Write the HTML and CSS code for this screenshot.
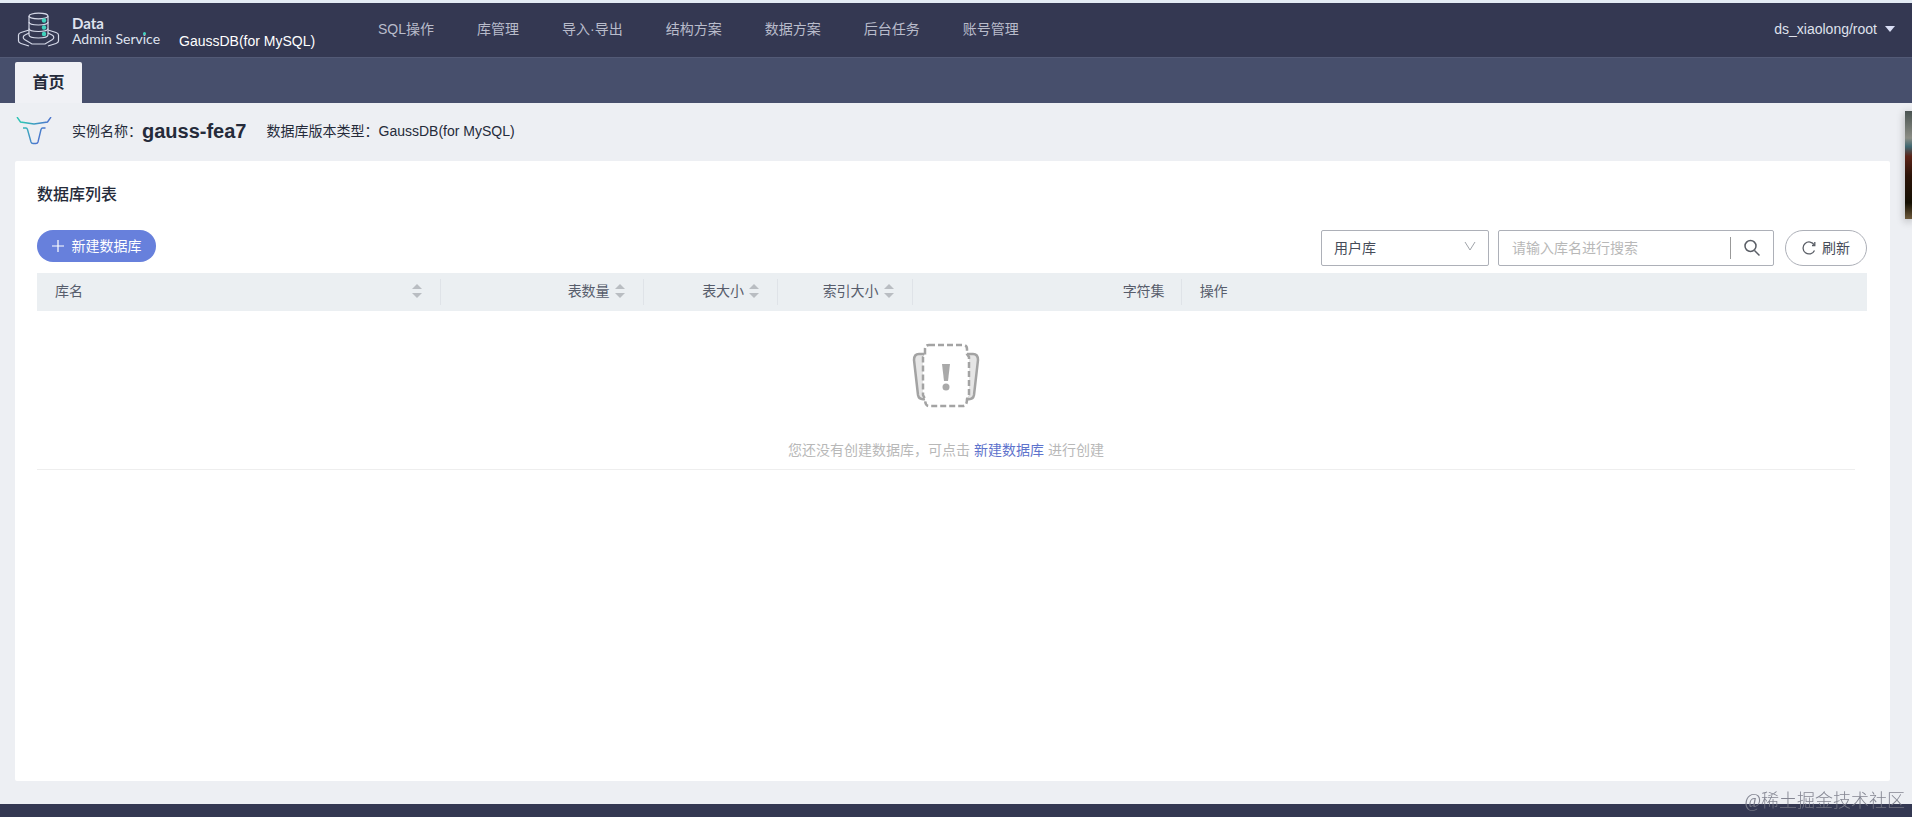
FILE: index.html
```html
<!DOCTYPE html>
<html lang="zh-CN">

<head>
  <meta charset="UTF-8">
  <meta name="viewport" content="width=device-width, initial-scale=1.0">
  <title>数据管理服务 DAS</title>
  <link rel="stylesheet" href="styles.css">
</head>
<body>
  <header class="header">
    <a href="#" class="logo">
      <svg width="44" height="36" viewBox="0 0 44 36" fill="none" stroke="#d5d9e8" stroke-width="1.2">
        <path d="M12 4v19c0 4 19 4 19 0V4"/>
        <ellipse cx="21.500" cy="4" rx="9.500" ry="2.800"/>
        <path d="M12 10c0 4 19 4 19 0M12 16.500c0 4 19 4 19 0"/>
        <path d="M12 18l-8 2.500c-1.500.5-2.500 1.500-2.500 2.500v6c0 1 1 2 2.500 2.500l8 2.500M31 18l8 2.500c1.500.5 2.500 1.500 2.500 2.500v6c0 1-1 2-2.500 2.500l-8 2.500"/>
        <path d="M12 21l-4 2c-2 1-2.500 3-.5 4.500l7.500 4.500h13l7.500-4.500c2-1.500 1.500-3.500-.5-4.500l-4-2"/>
        <g fill="#41d3bd" stroke="none">
          <circle cx="27" cy="8.500" r="2.200"/>
          <circle cx="27" cy="15.500" r="2.200"/>
          <circle cx="27" cy="22" r="2.200"/>
        </g>
      </svg>
      <span class="logo-text"><b>Data</b>Admin Serv<span class="dot">i</span>ce</span>
    </a>
    <span class="engine">GaussDB(for MySQL)</span>
    <nav class="nav">
      <a href="#">SQL操作</a>
      <a href="#">库管理</a>
      <a href="#">导入·导出</a>
      <a href="#">结构方案</a>
      <a href="#">数据方案</a>
      <a href="#">后台任务</a>
      <a href="#">账号管理</a>
    </nav>
    <button class="user">ds_xiaolong/root <span class="caret"></span></button>
  </header>

  <div class="tabs">
    <a href="#" class="tab">首页</a>
  </div>

  <div class="instance">
    <svg width="36" height="28" viewBox="0 0 36 28" fill="none" stroke="url(#bull)" stroke-width="1.400">
      <defs>
        <linearGradient id="bull" x1="0" y1="0" x2="36" y2="20" gradientUnits="userSpaceOnUse">
          <stop offset="0.200" stop-color="#2fc3b5"/>
          <stop offset="0.800" stop-color="#4f6fd0"/>
        </linearGradient>
      </defs>
      <path d="M1 0l3.500 5L18 7l13.500-2L35 0"/>
      <path d="M7 11h3q1 0 1.500 1.500L15 25q.5 1.500 2 1.500h3q1.500 0 2-1.500l3-12.500q.5-1.500 1.500-1.500h3"/>
    </svg>
    <span class="label">实例名称：</span>
    <strong class="name">gauss-fea7</strong>
    <span class="label">数据库版本类型：</span>
    <span class="value">GaussDB(for MySQL)</span>
  </div>

  <main class="card">
    <h1>数据库列表</h1>
    <div class="toolbar">
      <button class="create-btn">
        <svg width="12" height="12" viewBox="0 0 12 12" stroke="#fff" stroke-width="1.200"><path d="M6 0v12M0 6h12"/></svg>
        新建数据库
      </button>
      <div class="select">
        <select aria-label="库类型">
          <option>用户库</option>
        </select>
        <svg width="12" height="10" viewBox="0 0 12 10" fill="none" stroke="#a0a4aa"><path d="M1 1l5 8 5-8"/></svg>
      </div>
      <div class="search">
        <input type="text" placeholder="请输入库名进行搜索" aria-label="搜索库名">
        <button aria-label="搜索">
          <svg width="18" height="18" viewBox="0 0 18 18" fill="none" stroke="#5a5e66" stroke-width="1.500"><circle cx="7.500" cy="7" r="5.500"/><path d="M11.500 11.500l5 5"/></svg>
        </button>
      </div>
      <button class="refresh-btn">
        <svg width="14" height="14" viewBox="0 0 14 14" fill="none" stroke="#5a5e66" stroke-width="1.300"><path d="M12.500 9.500A6 6 0 1 1 12.300 4"/><path d="M12.800 1v3.500H10"/></svg>
        刷新
      </button>
    </div>

    <table class="db-table">
      <colgroup>
        <col class="col-name">
        <col class="col-count">
        <col class="col-size">
        <col class="col-size">
        <col class="col-charset">
        <col>
      </colgroup>
      <thead>
        <tr>
          <th><div class="th-name">库名 <span class="sort"></span></div></th>
          <th><div>表数量 <span class="sort"></span></div></th>
          <th><div>表大小 <span class="sort"></span></div></th>
          <th><div>索引大小 <span class="sort"></span></div></th>
          <th class="th-charset"><div>字符集</div></th>
          <th><div class="th-name">操作</div></th>
        </tr>
      </thead>
      <tbody>
        <tr>
          <td colspan="6">
            <div class="empty">
              <svg width="68" height="66" viewBox="0 0 68 66" fill="none" stroke="#a3a3a3" stroke-width="2.500">
                <path d="M13 11H7q-5 0-5 6l4 35q1 5 7 4zM55 11h6q5 0 5 6l-4 35q-1 5-7 4z" fill="#e6e6e6"/>
                <path d="M17 2h34q4 0 4 4v5l2 3v38l-2 4q0 7-4 7H17q-4 0-4-7l-2-4V14l2-3V6q0-4 4-4z" fill="#fff" stroke-dasharray="6 3"/>
                <path d="M30 21h8l-2 17h-4z" fill="#a9a9a9" stroke="none"/>
                <circle cx="34" cy="44" r="3.500" fill="#a9a9a9" stroke="none"/>
              </svg>
              <p>您还没有创建数据库，可点击 <a href="#">新建数据库</a> 进行创建</p>
            </div>
          </td>
        </tr>
      </tbody>
    </table>
  </main>

  <footer class="footer"></footer>
  <div class="side-photo"></div>
  <div class="watermark">@稀土掘金技术社区</div>
</body>

</html>
```

FILE: styles.css
```css
* {
  box-sizing: border-box;
}

body {
  margin: 0;
  min-height: 100vh;
  display: flex;
  flex-direction: column;
  background-color: #edeff3;
  border-top: 3px solid #e3ebf4;
  color: #252b3a;
  font-family: "Liberation Sans", "Noto Sans CJK SC", sans-serif;
  font-size: 14px;
  line-height: 20px;
}

a {
  color: inherit;
  text-decoration: none;
}

button,
input,
select {
  font: inherit;
  color: inherit;
  margin: 0;
  padding: 0;
  border: none;
  background: none;
}

button {
  cursor: pointer;
}

svg {
  flex: none;
}

.header {
  display: flex;
  align-items: center;
  height: 54px;
  padding: 0 17px 0 17px;
  background-color: #343852;
  color: #fff;
}

.logo {
  display: flex;
  align-items: center;
  gap: 11px;
  width: 162px;
}

.logo-text {
  padding-top: 2px;
  color: #dfe3ef;
  font-family: Lato, sans-serif;
  font-size: 14px;
  line-height: 16px;
  white-space: nowrap;
}

.logo-text b {
  display: block;
  font-size: 15px;
}

.dot {
  position: relative;
}

.dot::after {
  content: "";
  position: absolute;
  top: 2px;
  left: 0;
  width: 3px;
  height: 3px;
  border-radius: 50%;
  background-color: #41d3bd;
}

.engine {
  width: 199px;
  padding-top: 22px;
}

.nav {
  display: flex;
  flex: 1;
  gap: 43px;
  padding-bottom: 3px;
  color: #b9bccb;
}

.user {
  display: flex;
  align-items: center;
  gap: 8px;
  padding-bottom: 2px;
  color: #dfe1ec;
}

.caret {
  border: 5px solid transparent;
  border-top: 6px solid #d9def5;
  border-bottom: none;
}

.tabs {
  display: flex;
  align-items: flex-end;
  height: 46px;
  padding-left: 15px;
  border-top: 1px solid #535a76;
  background-color: #474f6c;
}

.tab {
  width: 67px;
  height: 41px;
  border-radius: 2px 2px 0 0;
  background-color: #f0f1f5;
  font-size: 16px;
  font-weight: bold;
  line-height: 41px;
  text-align: center;
}

.instance {
  display: flex;
  align-items: center;
  height: 58px;
  padding: 0 0 2px 16px;
}

.instance .label {
  margin-left: 20px;
}

.instance .name {
  font-size: 20px;
}

.card {
  flex: 1;
  margin: 0 22px 23px 15px;
  padding: 22px 23px 22px 22px;
  border-radius: 2px;
  background-color: #fff;
}

h1 {
  margin: 0;
  font-size: 16px;
  font-weight: 500;
  line-height: 24px;
}

.toolbar {
  display: flex;
  align-items: flex-start;
  height: 43px;
  margin-top: 23px;
  color: #464c59;
}

.create-btn {
  display: flex;
  align-items: center;
  justify-content: center;
  gap: 8px;
  width: 119px;
  height: 32px;
  margin-right: auto;
  padding-bottom: 1px;
  border-radius: 16px;
  background-color: #6780dc;
  color: #fff;
}

.select {
  position: relative;
  width: 168px;
  margin-right: 9px;
}

.select select {
  width: 100%;
  height: 36px;
  padding-left: 12px;
  border: 1px solid #adb0b8;
  border-radius: 2px;
  appearance: none;
}

.select svg {
  position: absolute;
  top: 11px;
  right: 13px;
  pointer-events: none;
}

.search {
  display: flex;
  align-items: center;
  width: 276px;
  height: 36px;
  margin-right: 11px;
  border: 1px solid #adb0b8;
  border-radius: 2px;
}

.search input {
  flex: 1;
  min-width: 0;
  padding-left: 13px;
}

.search input::placeholder {
  color: #b8b8b8;
}

.search button {
  display: flex;
  align-items: center;
  justify-content: center;
  width: 43px;
  height: 22px;
  border-left: 1px solid #999;
}

.refresh-btn {
  display: flex;
  align-items: center;
  justify-content: center;
  gap: 6px;
  width: 82px;
  height: 36px;
  border: 1px solid #adb0b8;
  border-radius: 18px;
}

.db-table {
  width: 100%;
  border-collapse: collapse;
  table-layout: fixed;
}

.col-name {
  width: 22.1%;
}

.col-count {
  width: 11.05%;
}

.col-size {
  width: 7.35%;
}

.col-charset {
  width: 14.7%;
}

.db-table th {
  height: 38px;
  padding: 0;
  background-color: #ebeff2;
  color: #575d6c;
  font-weight: normal;
}

.db-table th div {
  display: flex;
  align-items: center;
  justify-content: flex-end;
  gap: 5px;
  height: 26px;
  padding: 0 18px 2px;
  border-right: 1px solid #dfe3e8;
}

.db-table th .th-name {
  justify-content: space-between;
}

.db-table th:last-child div {
  border-right: none;
}

.db-table .th-charset div {
  padding-right: 16px;
}

.sort::before,
.sort::after {
  content: "";
  display: block;
  border: 5px solid transparent;
}

.sort::before {
  margin-bottom: 4px;
  border-top: none;
  border-bottom-color: #b9bdc2;
}

.sort::after {
  border-bottom: none;
  border-top-color: #b9bdc2;
}

.db-table td {
  padding: 0;
}

.empty {
  margin-right: 12px;
  padding: 32px 0 9px;
  border-bottom: 1px solid #eee;
  color: #b8b8b8;
  text-align: center;
}

.empty svg {
  display: block;
  margin: 0 auto 31px;
}

.empty p {
  margin: 0;
}

.empty a {
  color: #5e73cc;
}

.footer {
  height: 13px;
  background-color: #343852;
}

/* top edge of the round toggle at the left of the footer */
.footer::before {
  content: "";
  display: block;
  width: 6px;
  height: 13px;
  margin-left: 14px;
  border-bottom: 1px solid #b0b2bf;
}

.side-photo {
  position: fixed;
  top: 111px;
  right: 0;
  width: 7px;
  height: 108px;
  background: linear-gradient(#4a5452, #8b8d85 25%, #3f6670 33%, #5c2418 42%, #2c1408 60%, #151003 85%, #6e5a3c);
  box-shadow: 0 2px 8px rgba(0, 0, 0, 0.3);
}

.watermark {
  position: fixed;
  right: 7px;
  bottom: 4px;
  color: rgba(120, 122, 135, 0.9);
  font-family: "Liberation Serif", "Noto Sans CJK SC", serif;
  font-size: 18px;
  font-weight: 300;
  line-height: 24px;
}
```
